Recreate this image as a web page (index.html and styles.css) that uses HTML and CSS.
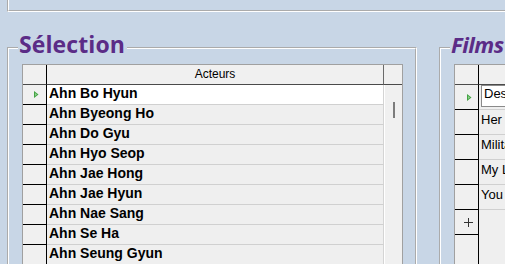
FILE: index.html
```html
<!DOCTYPE html>
<html lang="fr">
<head>
<meta charset="utf-8">
<title>Sélection</title>
<link rel="stylesheet" href="styles.css">
</head>
<body>
<div class="topbar"></div>
<div class="panels">
  <fieldset class="group group-sel">
    <legend class="group-title title-sel">Sélection</legend>
    <div class="ds ds-sel">
      <div class="corner"></div>
      <div class="head">Acteurs</div>
      <div class="head-scroll"></div>

      <div class="sel"><svg class="cur" width="5" height="7" viewBox="0 0 5 7"><polygon points="0,0 4.5,3.5 0,7" fill="#43a343"/><polygon points="1,2 3,3.5 1,5" fill="#8fd18f"/></svg></div>
      <div class="cell current">Ahn Bo Hyun</div>
      <div class="vscroll"><div class="thumb"></div></div>

      <div class="sel"></div><div class="cell">Ahn Byeong Ho</div>
      <div class="sel"></div><div class="cell">Ahn Do Gyu</div>
      <div class="sel"></div><div class="cell">Ahn Hyo Seop</div>
      <div class="sel"></div><div class="cell">Ahn Jae Hong</div>
      <div class="sel"></div><div class="cell">Ahn Jae Hyun</div>
      <div class="sel"></div><div class="cell">Ahn Nae Sang</div>
      <div class="sel"></div><div class="cell">Ahn Se Ha</div>
      <div class="sel"></div><div class="cell">Ahn Seung Gyun</div>
    </div>
  </fieldset>

  <fieldset class="group group-films">
    <legend class="group-title title-italic">Films</legend>
    <div class="ds ds-films">
      <div class="corner"></div>
      <div class="head"></div>

      <div class="sel"><svg class="cur" width="5" height="7" viewBox="0 0 5 7"><polygon points="0,0 4.5,3.5 0,7" fill="#43a343"/><polygon points="1,2 3,3.5 1,5" fill="#8fd18f"/></svg></div>
      <div class="cell"><div class="field">Despicable Me</div></div>

      <div class="sel"></div><div class="cell">Her</div>
      <div class="sel"></div><div class="cell">Military Academy</div>
      <div class="sel"></div><div class="cell">My Love</div>
      <div class="sel"></div><div class="cell">You Are My Sunshine</div>

      <div class="sel sel-new"><svg width="9" height="9" viewBox="0 0 9 9"><path d="M0 4.5H9M4.5 0V9" stroke="#333" stroke-width="1"/></svg></div>
      <div class="cell cell-new"></div>

      <div class="sel sel-fill"></div>
      <div class="cell cell-fill"></div>
    </div>
  </fieldset>
</div>
</body>
</html>
```

FILE: styles.css
```css
html, body {
  margin: 0;
  padding: 0;
}

body {
  width: 505px;
  height: 264px;
  overflow: hidden;
  background: #c8d6e6;
  font-family: "Liberation Sans", Arial, sans-serif;
}

.topbar {
  height: 10px;
  margin-left: 7px;
  border-left: 2px groove #ffffff;
  border-bottom: 2px groove #ffffff;
}

.panels {
  display: flex;
  gap: 22px;
  padding-left: 7px;
  margin-top: 20px;
}

.group {
  box-sizing: border-box;
  margin: 0;
  min-width: 0;
  flex: none;
  border: 2px groove #ffffff;
  padding: 0 12px 0 13px;
}

.group-sel {
  width: 410px;
}

.group-films {
  width: 320px;
  padding-right: 0;
}

.group-title {
  margin-left: -4px;
  padding: 0 2px 8px 1px;
  font-family: "Open Sans", "Liberation Sans", sans-serif;
  font-weight: 700;
  font-size: 22px;
  line-height: 24px;
  color: #5b2c87;
}

.title-sel {
  font-size: 23px;
  letter-spacing: 0.1px;
}

.title-italic {
  font-style: italic;
  letter-spacing: -0.5px;
}

/* datasheet */
.ds {
  display: grid;
  border: 1px solid #a0a0a0;
  background: #f0f0f0;
  color: #000;
}

.ds-sel {
  grid-template-columns: 24px 337px 18px;
  grid-auto-rows: 20px;
}

.ds-films {
  grid-template-columns: 24px 1fr;
  grid-template-rows: 20px repeat(6, 25px) 40px;
}

.corner,
.head,
.head-scroll,
.sel,
.cell {
  box-sizing: border-box;
}

.corner {
  background: #f0f0f0;
  border-right: 1px solid #000;
  border-bottom: 1px solid #4a4a4a;
}

.head {
  background: #f0f0f0;
  border-bottom: 1px solid #4a4a4a;
  font-size: 12px;
  line-height: 19px;
  text-align: center;
}

.ds-sel .head {
  border-right: 1px solid #6a6a6a;
}

.head-scroll {
  background: #f0f0f0;
  border-bottom: 1px solid #4a4a4a;
}

.sel {
  display: flex;
  align-items: center;
  justify-content: center;
  background: #f0f0f0;
  border-right: 1px solid #000;
  border-bottom: 1px solid #000;
}

.sel .cur {
  margin-left: 4px;
}

.ds-films .sel .cur {
  margin-left: 6px;
  margin-top: 1px;
}

.sel-new svg {
  margin-left: 4px;
}

.sel-fill {
  border-bottom: 0;
}

.cell {
  background: #efefef;
  border-bottom: 1px solid #d0d0d0;
  white-space: nowrap;
  overflow: hidden;
}

.ds-sel .cell {
  border-right: 1px solid #d4d4d4;
  padding: 0 0 3px 2px;
  font-weight: 700;
  font-size: 14px;
  line-height: 16px;
}

.ds-sel .cell.current {
  background: #ffffff;
}

.ds-films .cell {
  padding: 0 0 0 2px;
  font-size: 13px;
  line-height: 20px;
}

.ds-films .cell-new,
.ds-films .cell-fill {
  border-bottom: 0;
}

.field {
  box-sizing: border-box;
  height: 22px;
  margin-left: 0;
  padding: 0 0 0 2px;
  background: #ffffff;
  border: 1px solid #8a8a8a;
  border-right: 0;
  line-height: 16px;
}

.vscroll {
  grid-column: 3;
  grid-row: 2 / span 9;
  background: #f0f0f0;
  box-shadow: inset 1px 0 0 #ffffff;
  padding: 17px 0 0 9px;
  box-sizing: border-box;
}

.thumb {
  width: 2px;
  height: 16px;
  background: #7c7c7c;
}
```
